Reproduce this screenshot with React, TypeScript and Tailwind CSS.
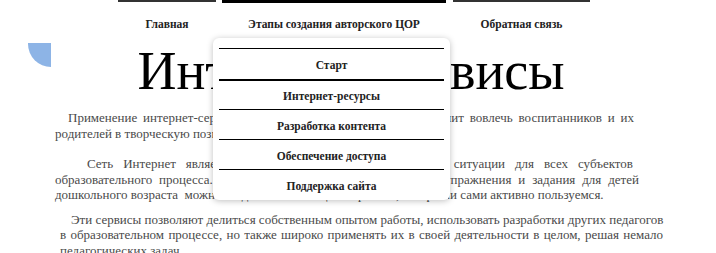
import React from "react";

// Lines kept as separate blocks so the justified edges land where the screenshot has them
function Line({ children, className = "", full = true }: { children: React.ReactNode; className?: string; full?: boolean }) {
  return (
    <div className={`whitespace-nowrap ${full ? "text-justify [text-align-last:justify]" : ""} ${className}`}>
      {children}
    </div>
  );
}

export default function App() {
  const stages = ["Старт", "Интернет-ресурсы", "Разработка контента", "Обеспечение доступа", "Поддержка сайта"];

  return (
    <div className="relative w-[716px] h-[253px] overflow-hidden bg-white font-['Liberation_Serif',serif]">
      {/* Top navigation */}
      <nav className="flex ml-[118px] gap-[6px]">
        <div className="w-[98px] border-t-2 border-[#333] pt-[14px] text-center text-[11.5px] font-bold text-[#222]">
          Главная
        </div>
        <div className="w-[224px] border-t-[3px] border-black pt-[13px] text-center text-[11.5px] font-bold text-[#222]">
          Этапы создания авторского ЦОР
        </div>
        <div className="w-[137px] ml-[1px] border-t-2 border-[#333] pt-[14px] text-center text-[11.5px] font-bold text-[#222]">
          Обратная связь
        </div>
      </nav>

      {/* Decorative quarter circle */}
      <div className="absolute left-[28px] top-[43px] w-[23px] h-[24px] bg-[#8db4e6] rounded-bl-full" />

      {/* Heading */}
      <h1 className="mt-[11px] pr-[14px] text-center text-[54px] leading-[54px] text-black">Интернет-сервисы</h1>

      {/* Body */}
      <div className="mt-[12px] text-[13px] leading-[15.5px] text-[#4a4a4a] font-['Liberation_Serif',serif]">
        <div className="ml-[55px] w-[579px]">
          <Line className="pl-[13px]">
            Применение интернет-сервисов в работе с дошкольниками позволит вовлечь воспитанников и их
          </Line>
          <Line full={false}>родителей в творческую познавательную деятельность.</Line>
        </div>

        <div className="ml-[55px] w-[584px] mt-[15px]">
          <Line className="pl-[32px] mr-[6px]">
            Сеть Интернет является средством создания развивающей ситуации для всех субъектов
          </Line>
          <Line>образовательного процесса. Педагоги находят в сети интересные упражнения и задания для детей</Line>
          <Line full={false}>
            дошкольного возраста&nbsp; можно создавать с помощью сервисов, которыми сами активно пользуемся.
          </Line>
        </div>

        <div className="ml-[60px] w-[603px] mt-[9px]">
          <Line className="pl-[11px]">
            Эти сервисы позволяют делиться собственным опытом работы, использовать разработки других педагогов
          </Line>
          <Line>в образовательном процессе, но также широко применять их в своей деятельности в целом, решая немало</Line>
          <Line full={false}>педагогических задач.</Line>
        </div>
      </div>

      {/* Dropdown menu of the middle tab */}
      <div className="absolute left-[213px] top-[38px] w-[237px] h-[162px] rounded-md bg-white shadow-[0_1px_6px_rgba(0,0,0,0.25)] px-[6px] pt-[10px]">
        {stages.map((s, i) => (
          <div
            key={s}
            className={`flex items-center justify-center pt-[4px] text-[11.5px] font-bold text-[#222] ${
              i === 0 ? "h-[31px]" : "h-[30px]"
            } ${i === 1 ? "border-t-2 border-black" : "border-t border-black"}`}
          >
            {s}
          </div>
        ))}
      </div>
    </div>
  );
}
